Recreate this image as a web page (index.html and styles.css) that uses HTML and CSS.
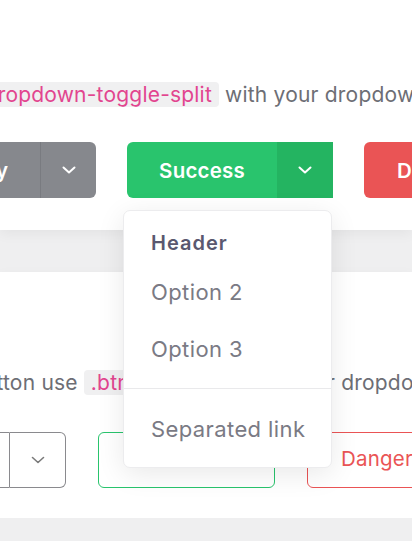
FILE: index.html
```html
<!DOCTYPE html>
<html lang="en">
<head>
<meta charset="utf-8">
<title>Split dropdowns</title>
<link rel="stylesheet" href="styles.css">
</head>
<body>
<main class="page">
  <section class="card card-top">
    <p class="lead">To create split buttons, combine <code>.dropdown-toggle-split</code> with your dropdown toggle.</p>
    <div class="btn-row row-solid">
      <div class="btn-group">
        <button class="btn btn-secondary main-secondary">Secondary</button>
        <button class="btn btn-secondary split" aria-label="Toggle">
          <svg width="14" height="8" viewBox="0 0 14 8"><polyline points="1.5,1.5 7,6.5 12.5,1.5" fill="none" stroke="#fff" stroke-width="2" stroke-linecap="round" stroke-linejoin="round"/></svg>
        </button>
      </div>
      <div class="btn-group has-menu">
        <button class="btn btn-success main-success">Success</button>
        <button class="btn btn-success-dark split" aria-label="Toggle">
          <svg width="14" height="8" viewBox="0 0 14 8"><polyline points="1.5,1.5 7,6.5 12.5,1.5" fill="none" stroke="#fff" stroke-width="2" stroke-linecap="round" stroke-linejoin="round"/></svg>
        </button>
        <div class="menu">
          <div class="menu-header">Header</div>
          <a class="menu-item" href="#">Option 2</a>
          <a class="menu-item" href="#">Option 3</a>
          <div class="menu-divider"></div>
          <a class="menu-item" href="#">Separated link</a>
        </div>
      </div>
      <div class="btn-group">
        <button class="btn btn-danger main-danger">Danger</button>
      </div>
    </div>
  </section>

  <section class="card card-bottom">
    <p class="lead lead-two">For an outline split button use <code>.btn-outline-*</code> with your dropdown toggle.</p>
    <div class="btn-row row-outline">
      <div class="btn-group outline-group">
        <button class="btn obtn-secondary main-secondary">Secondary</button>
        <button class="btn obtn-secondary osplit" aria-label="Toggle">
          <svg width="14" height="8" viewBox="0 0 14 8"><polyline points="1.5,1.5 7,6.5 12.5,1.5" fill="none" stroke="#7a7a7a" stroke-width="1.6" stroke-linecap="round" stroke-linejoin="round"/></svg>
        </button>
      </div>
      <div class="btn-group">
        <button class="btn obtn-success main-osuccess">Success</button>
      </div>
      <div class="btn-group">
        <button class="btn obtn-danger main-danger">Danger</button>
      </div>
    </div>
  </section>
</main>
</body>
</html>
```

FILE: styles.css
```css
* { box-sizing: border-box; }

html, body {
  margin: 0;
  padding: 0;
}

body {
  background: #efeff0;
  font-family: "Inter", "Open Sans", "DejaVu Sans", sans-serif;
  overflow: hidden;
}

.page {
  width: 412px;
}

.card {
  background: #ffffff;
  box-shadow: 0 4px 12px rgba(0, 0, 0, 0.05);
  overflow: visible;
  position: relative;
}

.card-top {
  height: 230px;
  padding-top: 80px;
  z-index: 5;
}

.card-bottom {
  height: 246px;
  margin-top: 42px;
  padding-top: 96px;
  z-index: 1;
}

.lead {
  margin: 0;
  font-size: 21px;
  letter-spacing: 0.2px;
  line-height: 30px;
  color: #6d6e75;
  white-space: nowrap;
  font-weight: 400;
}

.card-top .lead { margin-left: -359px; }
.lead-two { margin-left: -221px; }

code {
  font-family: inherit;
  font-size: 21px;
  color: #e2458f;
  background: #f0f0f1;
  border-radius: 4px;
  padding: 0 7px;
}

.btn-row {
  display: flex;
  gap: 31px;
  height: 56px;
}

.row-solid {
  margin-top: 32px;
  margin-left: -133px;
}

.row-outline {
  margin-top: 34px;
  margin-left: -163px;
  gap: 32px;
}

.btn-group {
  display: flex;
  height: 56px;
  position: relative;
}

.btn {
  font-family: inherit;
  font-size: 20.5px;
  font-weight: 600;
  letter-spacing: 0.2px;
  border: 0;
  margin: 0;
  height: 56px;
  display: flex;
  align-items: center;
  justify-content: center;
  padding: 0;
  cursor: pointer;
}

.btn-group .btn:first-child {
  border-radius: 6px 0 0 6px;
}
.btn-group .btn:last-child {
  border-radius: 0 6px 6px 0;
}
.btn-group .btn:only-child {
  border-radius: 6px;
}

.split { width: 56px; }
.main-secondary { width: 173px; }
.main-success { width: 150px; }
.main-danger { width: 143px; }
.main-osuccess { width: 177px; }

.btn-secondary {
  background: #86888d;
  color: #fff;
}
.btn-secondary.split {
  border-left: 1px solid #797b80;
}

.btn-success {
  background: #29c46d;
  color: #fff;
}
.btn-success-dark {
  background: #24b461;
  color: #fff;
}

.btn-danger {
  background: #ea5455;
  color: #fff;
  justify-content: flex-start;
  padding-left: 33px;
}

.obtn-secondary,
.obtn-success,
.obtn-danger {
  padding-bottom: 3px;
}

.obtn-secondary {
  background: #fff;
  border: 1px solid #8a8a8e;
  color: #86888d;
}
.obtn-secondary.osplit {
  border-left: 0;
  width: 56px;
  padding-bottom: 0;
}
.outline-group .main-secondary {
  border-right: 1px solid #8a8a8e;
}

.obtn-success {
  background: #fff;
  border: 1px solid #29c46d;
  color: #29c46d;
}

.obtn-danger {
  background: #fff;
  border: 1px solid #ea5455;
  color: #ea5455;
  font-weight: 400;
  justify-content: flex-start;
  padding-left: 33px;
}

/* dropdown menu overlay */
.menu {
  position: absolute;
  top: 68px;
  left: -4px;
  width: 209px;
  background: #fff;
  border: 1px solid #ececee;
  border-radius: 7px;
  box-shadow: 0 6px 28px rgba(0, 0, 0, 0.09);
  padding: 12px 0 10px;
  z-index: 10;
}

.menu-header {
  height: 40px;
  display: flex;
  align-items: center;
  padding-left: 27px;
  font-size: 20px;
  letter-spacing: 1px;
  font-weight: 600;
  color: #5a586f;
}

.menu-item {
  height: 57px;
  display: flex;
  align-items: center;
  padding-left: 27px;
  font-size: 22px;
  letter-spacing: 0.4px;
  font-weight: 400;
  color: #7a7a84;
  text-decoration: none;
  white-space: nowrap;
}

.menu-divider {
  height: 1px;
  background: #e9e9eb;
  margin: 11px 0 11px;
}
```
